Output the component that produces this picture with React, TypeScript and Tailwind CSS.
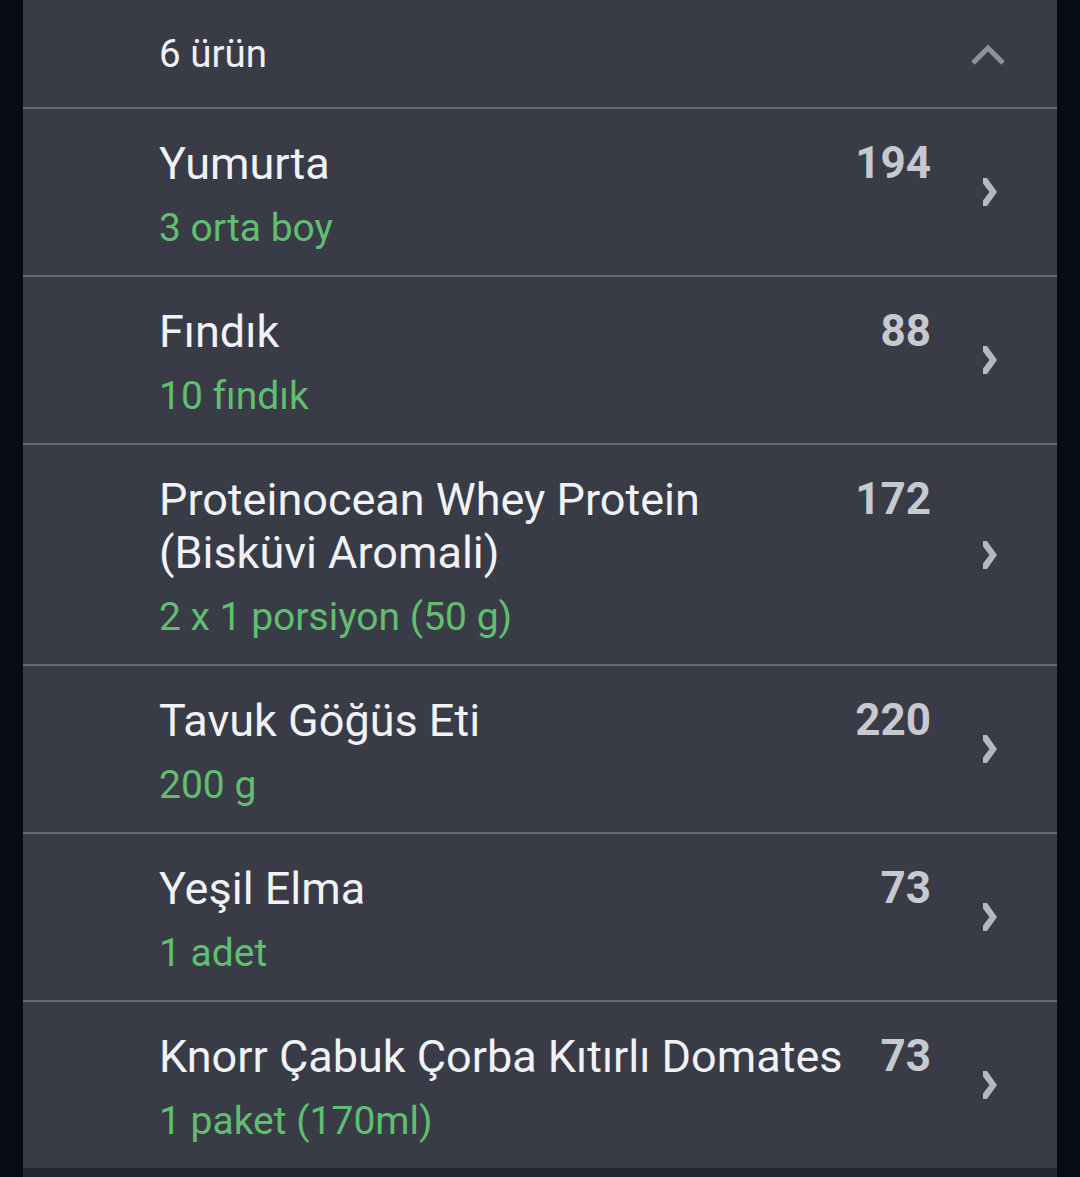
const items = [
  { name: "Yumurta", amount: "3 orta boy", kcal: 194 },
  { name: "Fındık", amount: "10 fındık", kcal: 88 },
  { name: "Proteinocean Whey Protein (Bisküvi Aromali)", amount: "2 x 1 porsiyon (50 g)", kcal: 172 },
  { name: "Tavuk Göğüs Eti", amount: "200 g", kcal: 220 },
  { name: "Yeşil Elma", amount: "1 adet", kcal: 73 },
  { name: "Knorr Çabuk Çorba Kıtırlı Domates", amount: "1 paket (170ml)", kcal: 73 },
];

function ChevronUp() {
  return (
    <svg width="36" height="24" viewBox="0 0 36 24" fill="none" aria-hidden>
      <polyline points="3,21 18,6 33,21" stroke="#8e919a" strokeWidth="5" strokeLinejoin="miter" />
    </svg>
  );
}

function ChevronRight() {
  return (
    <svg width="16" height="28" viewBox="0 0 16 28" fill="none" aria-hidden>
      <polygon points="1,0 5,0 15,14 5,28 1,28 1,22.5 7.5,14 1,5.5" fill="#b6b8c0" />
    </svg>
  );
}

export default function App() {
  return (
    <div
      className="min-h-[1177px] bg-[#060b16]"
      style={{ fontFamily: "Roboto, 'Noto Sans', sans-serif" }}
    >
      <div className="mx-[23px] bg-[#393c47]">
        {/* Header */}
        <div className="h-[107px] flex items-center pl-[136px] pr-[51px]">
          <span className="flex-1 text-[38.5px] text-[#eef0f3]">6 ürün</span>
          <ChevronUp />
        </div>

        {items.map((item) => (
          <div
            key={item.name}
            className="border-t-2 border-[#676a74] flex items-center pl-[136px] pr-[59px]"
          >
            <div className="flex-1 flex items-start pt-[28px] pb-[20px]">
              <div className="flex-1 min-w-0">
                <p className="text-[45px] leading-[53px] text-[#f1f2f5]">{item.name}</p>
                <p className="mt-[12px] text-[39px] leading-[53px] text-[#5fbf6f]">{item.amount}</p>
              </div>
              <p className="w-[80px] text-right text-[44px] leading-[53px] font-bold text-[#c7c9cf]">
                {item.kcal}
              </p>
            </div>
            <div className="ml-[51px] flex items-center">
              <ChevronRight />
            </div>
          </div>
        ))}
      </div>
      <div className="mx-[23px] h-[10px] bg-[#23262f]" />
    </div>
  );
}
